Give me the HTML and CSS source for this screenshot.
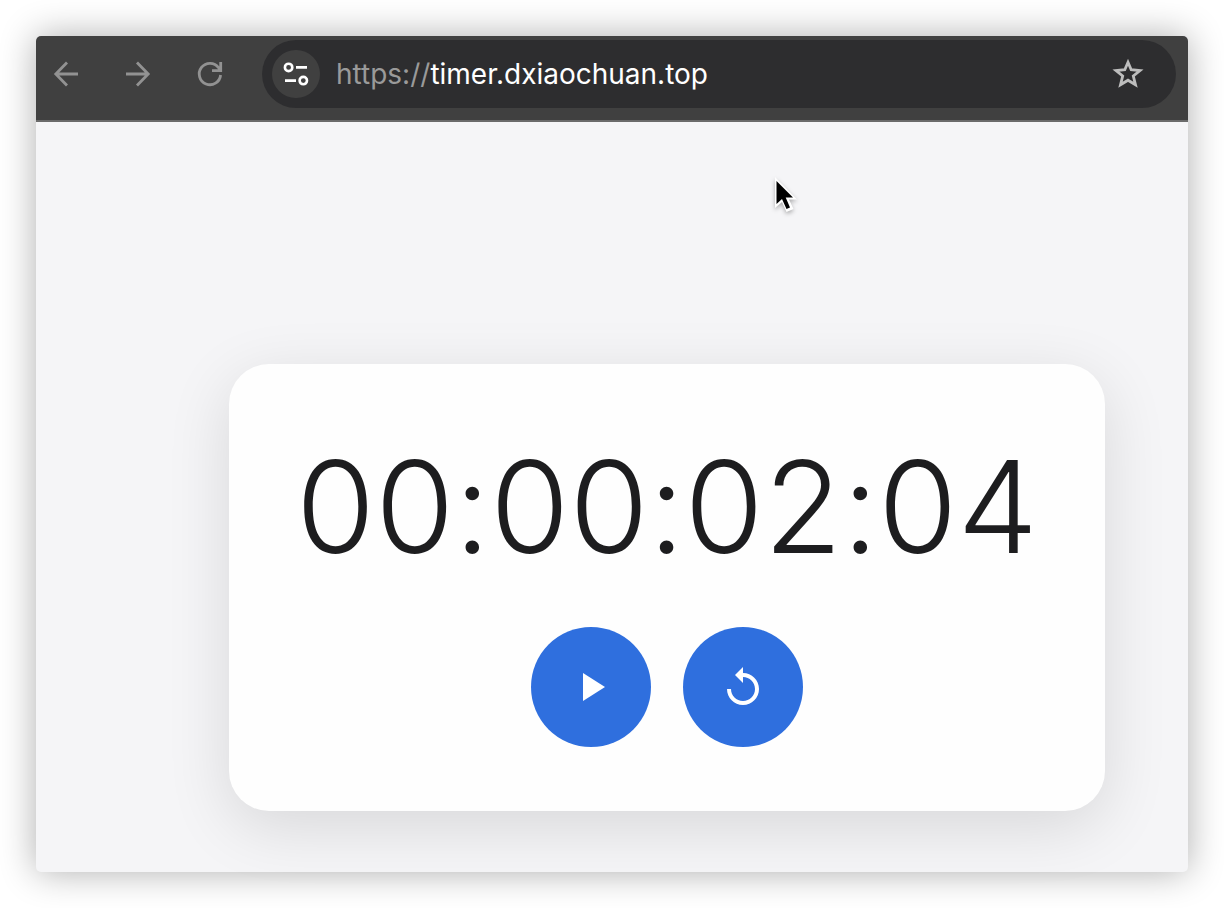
FILE: index.html
```html
<!DOCTYPE html>
<html lang="en">
  <head>
    <meta charset="UTF-8" />
    <meta name="viewport" content="width=device-width, initial-scale=1.0" />
    <title>Timer</title>
    <link rel="stylesheet" href="styles.css">
  </head>
  <body>
    <div class="window">
      <header class="toolbar">
        <nav class="nav-buttons">
          <button class="nav-button" aria-label="Back">
            <svg width="28" height="28" viewBox="0 0 28 28" fill="none" stroke="currentColor" stroke-width="2.800">
              <path d="M26 14H4M15 2.500L3.800 14l11.200 11.500" />
            </svg>
          </button>
          <button class="nav-button" aria-label="Forward">
            <svg width="28" height="28" viewBox="0 0 28 28" fill="none" stroke="currentColor" stroke-width="2.800">
              <path d="M2 14h22M13 2.500L24.200 14 13 25.500" />
            </svg>
          </button>
          <button class="nav-button" aria-label="Reload">
            <svg width="28" height="28" viewBox="0 0 28 28" fill="none" stroke="currentColor" stroke-width="2.800">
              <path d="M24.600 15A10.700 10.700 0 1 1 22.600 7.700L24.700 10.600M24.700 2v8.700H16" />
            </svg>
          </button>
        </nav>
        <div class="address-bar">
          <button class="site-button" aria-label="Site information">
            <svg width="28" height="28" viewBox="0 0 28 28" fill="none" stroke="currentColor" stroke-width="2.600">
              <circle cx="6.600" cy="7.400" r="3.700" />
              <path d="M14 7.400h11M3 20.600h11" />
              <circle cx="21.300" cy="20.600" r="3.700" />
            </svg>
          </button>
          <div class="url" role="textbox" aria-label="Address"><span class="scheme">https://</span>timer.dxiaochuan.top</div>
          <button class="star-button" aria-label="Bookmark">
            <svg width="32" height="32" viewBox="0 0 32 32" fill="none" stroke="currentColor" stroke-width="2.800">
              <path d="M16 4.200L19.200 11.700 28 12.500 21.300 18 23.500 26.800 16 22.200 8.500 26.800 10.700 18 4 12.500 12.800 11.700Z" />
            </svg>
          </button>
        </div>
      </header>

      <main class="page">
        <section class="timer-card">
          <div class="time" id="time">00:00:02:04</div>
          <div class="controls">
            <button class="control-button" aria-label="Start">
              <svg width="48" height="48" viewBox="0 0 24 24" fill="currentColor">
                <path d="M8 5v14l11-7z" />
              </svg>
            </button>
            <button class="control-button" aria-label="Reset">
              <svg width="48" height="48" viewBox="0 0 24 24" fill="currentColor">
                <path d="M12 5V2L8 6l4 4V7c3.310 0 6 2.690 6 6s-2.690 6-6 6-6-2.690-6-6H4c0 4.420 3.580 8 8 8s8-3.580 8-8-3.580-8-8-8z" />
              </svg>
            </button>
          </div>
        </section>
      </main>

      <!-- mouse pointer -->
      <svg class="cursor" width="28" height="40" viewBox="0 0 28 40">
        <path d="M3 2v31l7-6 4.500 10 7-3-4.500-9.500h8z" fill="#fff" />
        <path d="M4.500 6v23l5.500-5L14.500 34l3.500-1.500L13.700 22.500H21z" fill="#000" />
      </svg>
    </div>
  </body>
</html>
```

FILE: styles.css
```css
* {
  box-sizing: border-box;
}
body {
  margin: 0;
  padding: 36px;
  background: #fff;
  font-family: Inter, 'Liberation Sans', sans-serif;
}
button {
  display: flex;
  align-items: center;
  justify-content: center;
  flex: none;
  padding: 0;
  border: none;
  background: none;
  cursor: pointer;
}
.window {
  position: relative;
  display: flex;
  flex-direction: column;
  min-height: calc(100vh - 72px);
  border-radius: 5px;
  background: #f5f5f7;
  box-shadow: 0 0 36px rgba(0, 0, 0, 0.32);
}
.toolbar {
  display: flex;
  gap: 28px;
  padding: 4px 12px 12px 6px;
  border-bottom: 2px solid #6b6b6b;
  border-radius: 5px 5px 0 0;
  background: #404040;
}
.nav-buttons {
  display: flex;
  align-items: center;
  gap: 24px;
}
.nav-button {
  width: 48px;
  height: 48px;
  color: #929292;
}
.address-bar {
  display: flex;
  align-items: center;
  flex: 1;
  height: 68px;
  padding: 0 24px 0 10px;
  border-radius: 34px;
  background: #2d2d2f;
}
.site-button {
  width: 48px;
  height: 48px;
  border-radius: 50%;
  background: #404040;
  color: #fff;
}
.url {
  flex: 1;
  padding-left: 16px;
  color: #fff;
  font-size: 28px;
  line-height: 36px;
}
.scheme {
  color: #9a9a9a;
}
.star-button {
  width: 48px;
  height: 48px;
  color: #bdbdbd;
}
.page {
  flex: 1;
  padding: 242px 83px 61px 193px;
}
.timer-card {
  padding: 64px;
  border-radius: 40px;
  background: #fefefe;
  box-shadow: 0 16px 64px rgba(0, 0, 0, 0.12);
}
.time {
  margin-bottom: 41px;
  color: #1d1d1f;
  font-size: 128px;
  font-weight: 300;
  font-feature-settings: 'calt' 0;
  line-height: 158px;
  text-align: center;
  white-space: nowrap;
}
.controls {
  display: flex;
  justify-content: center;
  gap: 32px;
}
.control-button {
  width: 120px;
  height: 120px;
  border-radius: 50%;
  background: #2f6fde;
  color: #fff;
}
.control-button:hover {
  background: #2862c8;
}
.cursor {
  position: absolute;
  top: 139px;
  left: 736px;
  filter: drop-shadow(0 2px 2px rgba(0, 0, 0, 0.3));
}
```
